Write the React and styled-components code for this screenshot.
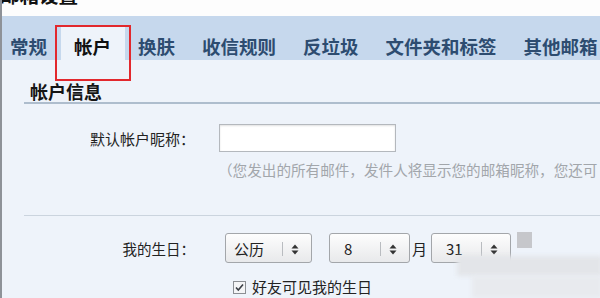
import React from "react";
import styled, { createGlobalStyle } from "styled-components";

const GlobalStyle = createGlobalStyle`
  html, body {
    margin: 0;
    padding: 0;
    background: #ffffff;
  }
  body {
    font-family: "Noto Sans CJK SC", "Noto Sans", sans-serif;
    width: 600px;
    height: 298px;
    overflow: hidden;
  }
`;

const Page = styled.div`
  position: relative;
  width: 600px;
  height: 298px;
  overflow: hidden;
  border-left: 2px solid #8e9298;
  box-sizing: border-box;
  background: #eef3fa;
`;

const Header = styled.div`
  height: 16px;
  background: #fdfdfd;
  overflow: hidden;
`;

const Title = styled.h1`
  margin: -15px 0 0 -2px;
  font-size: 19.5px;
  line-height: 20px;
  font-weight: 700;
  color: #111;
`;

const TabBar = styled.div`
  height: 44px;
  display: flex;
  align-items: flex-end;
  background: #c6d8ed;
`;

const Tab = styled.div`
  position: relative;
  height: 34px;
  box-sizing: border-box;
  padding: 6px 13.5px 0;
  display: flex;
  align-items: center;
  font-size: 18.5px;
  font-weight: 700;
  white-space: nowrap;
  color: ${(p) => (p.active ? "#111" : "#2d4c70")};
  background: ${(p) => (p.active ? "#eef3fa" : "transparent")};

  &:first-child {
    padding-left: 8px;
  }
`;

const Highlight = styled.span`
  position: absolute;
  left: -6px;
  top: -1px;
  width: 76px;
  height: 56px;
  border: 2px solid #e2282d;
  box-sizing: border-box;
  pointer-events: none;
`;

const Content = styled.div`
  padding: 20px 0 0 22px;
`;

const SectionTitle = styled.h2`
  margin: 0;
  height: 22px;
  font-size: 18px;
  line-height: 22px;
  font-weight: 700;
  color: #151515;
  padding-left: 6px;
  border-bottom: 2px solid #aebdcd;
`;

const FieldRow = styled.div`
  display: grid;
  grid-template-columns: 171px 1fr;
  column-gap: 24px;
  align-items: center;
  margin-top: ${(p) => p.gap || 0}px;
`;

const Label = styled.div`
  text-align: right;
  font-size: ${(p) => p.size || 15}px;
  color: #222;
  white-space: nowrap;
`;

const TextInput = styled.div`
  width: 177px;
  height: 28px;
  box-sizing: border-box;
  background: #fff;
  border: 1px solid #b4b8bd;
  box-shadow: inset 0 1px 2px rgba(0, 0, 0, 0.12);
`;

const Hint = styled.div`
  font-size: 14.6px;
  line-height: 18px;
  color: #a2a6ab;
  white-space: nowrap;
  overflow: hidden;
  margin-left: -1px;
`;

const Divider = styled.div`
  margin-top: 36px;
  border-top: 1px solid #cbd4de;
`;

const Controls = styled.div`
  display: flex;
  align-items: center;
  margin-left: 6px;
`;

const Select = styled.div`
  position: relative;
  width: ${(p) => p.width}px;
  height: 30px;
  box-sizing: border-box;
  margin-right: ${(p) => p.spacing || 0}px;
  padding-left: ${(p) => p.inset || 14}px;
  display: flex;
  align-items: center;
  border: 1px solid #a3a6aa;
  border-radius: 3px;
  background: linear-gradient(#fdfdfd, #e8e9eb);
  font-size: 15px;
  color: #222;
`;

const SelectBar = styled.span`
  position: absolute;
  right: 28px;
  top: 8px;
  width: 1px;
  height: 14px;
  background: #b9bcc0;
`;

const SelectArrows = styled.svg`
  position: absolute;
  right: 12px;
  top: 10px;
`;

const Unit = styled.span`
  font-size: 15px;
  color: #222;
  margin: 0 4px 0 2px;
`;

const CheckLine = styled.label`
  display: flex;
  align-items: center;
  gap: 6px;
  margin-left: 14px;
  font-size: 15px;
  line-height: 18px;
  color: #222;
  white-space: nowrap;
`;

const Mosaic = styled.div`
  position: absolute;
  left: ${(p) => p.x}px;
  top: ${(p) => p.y}px;
  width: ${(p) => p.w}px;
  height: ${(p) => p.h}px;
  background: ${(p) => p.color};
  filter: blur(${(p) => p.blur || 0}px);
`;

function Arrows() {
  return (
    <SelectArrows width="8" height="11" viewBox="0 0 8 11">
      <path d="M4 0.5 L7.5 4.5 H0.5 Z" fill="#333" />
      <path d="M4 10.5 L7.5 6.5 H0.5 Z" fill="#333" />
    </SelectArrows>
  );
}

function DropDown({ value, width, inset, spacing }) {
  return (
    <Select width={width} inset={inset} spacing={spacing}>
      {value}
      <SelectBar />
      <Arrows />
    </Select>
  );
}

function CheckBox() {
  return (
    <svg width="13" height="13" viewBox="0 0 13 13">
      <rect x="0.5" y="0.5" width="12" height="12" fill="#f4f5f7" stroke="#8b8f94" />
      <path d="M3 6.5 L5.3 9 L10 3.5" fill="none" stroke="#3a3f46" strokeWidth="1.6" />
    </svg>
  );
}

const tabs = ["常规", "帐户", "换肤", "收信规则", "反垃圾", "文件夹和标签", "其他邮箱"];

export default function App() {
  return (
    <>
      <GlobalStyle />
      <Page>
        <Header>
          <Title>邮箱设置</Title>
        </Header>
        <TabBar>
          {tabs.map((t) => (
            <Tab key={t} active={t === "帐户"}>
              {t}
              {t === "帐户" && <Highlight />}
            </Tab>
          ))}
        </TabBar>
        <Content>
          <SectionTitle>帐户信息</SectionTitle>
          <FieldRow gap={20}>
            <Label>默认帐户昵称：</Label>
            <TextInput />
          </FieldRow>
          <FieldRow gap={9}>
            <span />
            <Hint>（您发出的所有邮件，发件人将显示您的邮箱昵称，您还可</Hint>
          </FieldRow>
          <Divider />
          <FieldRow gap={17}>
            <Label size={14.5}>我的生日：</Label>
            <Controls>
              <DropDown value="公历" width={87} inset={8} spacing={17} />
              <DropDown value="8" width={81} />
              <Unit>月</Unit>
              <DropDown value="31" width={80} />
            </Controls>
          </FieldRow>
          <FieldRow gap={15}>
            <span />
            <CheckLine>
              <CheckBox />
              好友可见我的生日
            </CheckLine>
          </FieldRow>
        </Content>
        <Mosaic x={515} y={232} w={15} h={16} color="#c6c7cb" />
        <Mosaic x={455} y={256} w={145} h={20} color="#e3e5e9" blur={2} />
        <Mosaic x={470} y={276} w={130} h={22} color="#e8eaee" blur={2} />
      </Page>
    </>
  );
}
